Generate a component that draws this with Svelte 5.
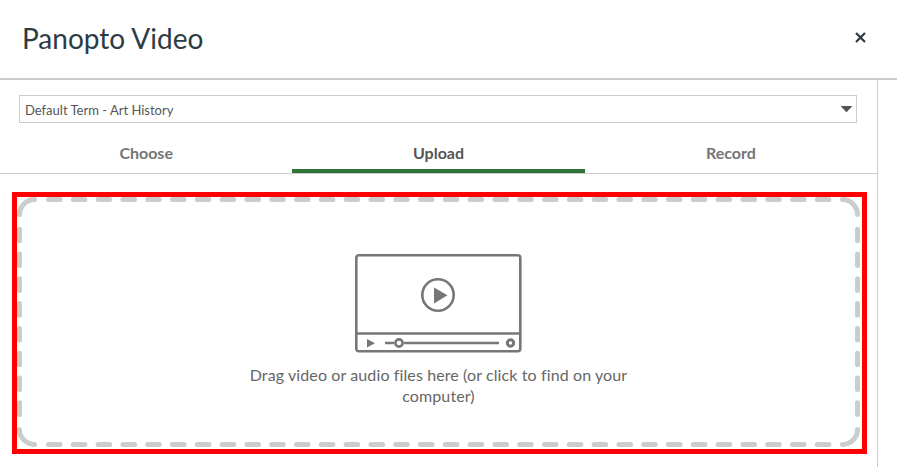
<script>
	let tabs = ['Choose', 'Upload', 'Record'];
	let active = 1;
</script>

<div class="modal">
	<header>
		<h1>Panopto Video</h1>
		<button class="close" aria-label="Close">
			<svg width="11" height="11" viewBox="0 0 11 11">
				<path d="M1 1l9 9M10 1l-9 9" stroke="#2d3b45" stroke-width="2.2" fill="none" />
			</svg>
		</button>
	</header>

	<main>
		<div class="folder">
			<span>Default Term - Art History</span>
			<svg width="11" height="6" viewBox="0 0 11 6">
				<path d="M0.5 0h10a.5.5 0 0 1 .3.8l-4.8 5a.6.6 0 0 1-1 0L.2.8A.5.5 0 0 1 .5 0z" fill="#555" />
			</svg>
		</div>

		<nav>
			{#each tabs as tab, i}
				<div class="tab {active === i ? 'active' : ''}">{tab}</div>
			{/each}
		</nav>

		<div class="highlight">
			<div class="drop">
				<svg class="dashes" width="845" height="252" viewBox="0 0 845 252">
					<g fill="none" stroke="#ccc" stroke-width="5" stroke-linecap="round">
						<path d="M2.5 17.5A15 15 0 0 1 17.5 2.5" />
						<path d="M825.5 2.5A15 15 0 0 1 840.5 17.5" />
						<path d="M2.5 232.5A15 15 0 0 0 17.5 247.5" />
						<path d="M825.5 247.5A15 15 0 0 0 840.5 232.5" />
						<g stroke-dasharray="11.6 13.2">
							<path d="M31.5 2.5H812" />
							<path d="M31.5 247.5H812" />
							<path d="M2.5 32.2V218" />
							<path d="M840.5 32.2V218" />
						</g>
					</g>
				</svg>
				<svg class="video" width="167" height="100" viewBox="0 0 167 100">
					<g fill="none" stroke="#777" stroke-width="2.6">
						<rect x="1.3" y="1.3" width="164" height="96" rx="2.5" />
						<path d="M1.3 79.5H165" />
						<circle cx="83" cy="41" r="15.7" />
						<path d="M30 89H39M49 89H144" />
						<circle cx="44" cy="89" r="3.6" fill="#fff" />
						<circle cx="155.5" cy="89" r="3.2" stroke-width="3" />
					</g>
					<path d="M79 33.5L92.5 41.2L79 49.5z" fill="#777" />
					<path d="M12 85L20 89.2L12 93.5z" fill="#777" />
				</svg>
				<p>Drag video or audio files here (or click to find on your computer)</p>
			</div>
		</div>
	</main>
</div>

<style>
	:global(body) {
		margin: 0;
		background: #fff;
		font-family: Lato, "Liberation Sans", sans-serif;
	}

	.modal {
		width: 897px;
		height: 467px;
		overflow: hidden;
	}

	header {
		box-sizing: border-box;
		border-bottom: 2px solid #c7cdd1;
		height: 80px;
		display: flex;
		align-items: flex-start;
		justify-content: space-between;
		padding: 0 31px 0 22px;
	}

	h1 {
		margin: 20px 0 0;
		font-size: 28px;
		line-height: 37px;
		font-weight: 400;
		color: #2d3b45;
	}

	.close {
		margin-top: 32px;
		padding: 0;
		border: 0;
		background: none;
		line-height: 0;
	}

	main {
		width: 877px;
		height: 387px;
		border-right: 1px solid #ccc;
		padding-top: 15px;
		box-sizing: content-box;
	}

	.folder {
		margin: 0 20px 0 19px;
		height: 28px;
		box-sizing: border-box;
		border: 1px solid #ccc;
		display: flex;
		align-items: center;
		justify-content: space-between;
		padding: 0 4px 0 5px;
		font-size: 13px;
		color: #555;
	}

	.folder span {
		padding-top: 2px;
	}

	nav {
		display: grid;
		grid-template-columns: repeat(3, 1fr);
		margin-top: 12px;
		border-bottom: 1px solid #ccc;
	}

	.tab {
		height: 38px;
		box-sizing: border-box;
		padding-top: 8px;
		text-align: center;
		font-size: 16px;
		line-height: 20px;
		font-weight: 700;
		color: #767676;
	}

	.active {
		color: #555;
		border-bottom: 4px solid #2e7439;
	}

	.highlight {
		margin: 18px 10px 0 12px;
		height: 262px;
		box-sizing: border-box;
		border: 5px solid #f00;
	}

	.drop {
		position: relative;
		width: 843px;
		height: 252px;
		display: flex;
		flex-direction: column;
		align-items: center;
		padding-top: 57px;
		box-sizing: border-box;
	}

	.dashes {
		position: absolute;
		left: 0;
		top: 0;
	}

	.video {
		display: block;
	}

	p {
		margin: 10px 0 0;
		width: 400px;
		text-align: center;
		font-size: 16px;
		letter-spacing: 0.11px;
		line-height: 21px;
		color: #666;
	}
</style>
